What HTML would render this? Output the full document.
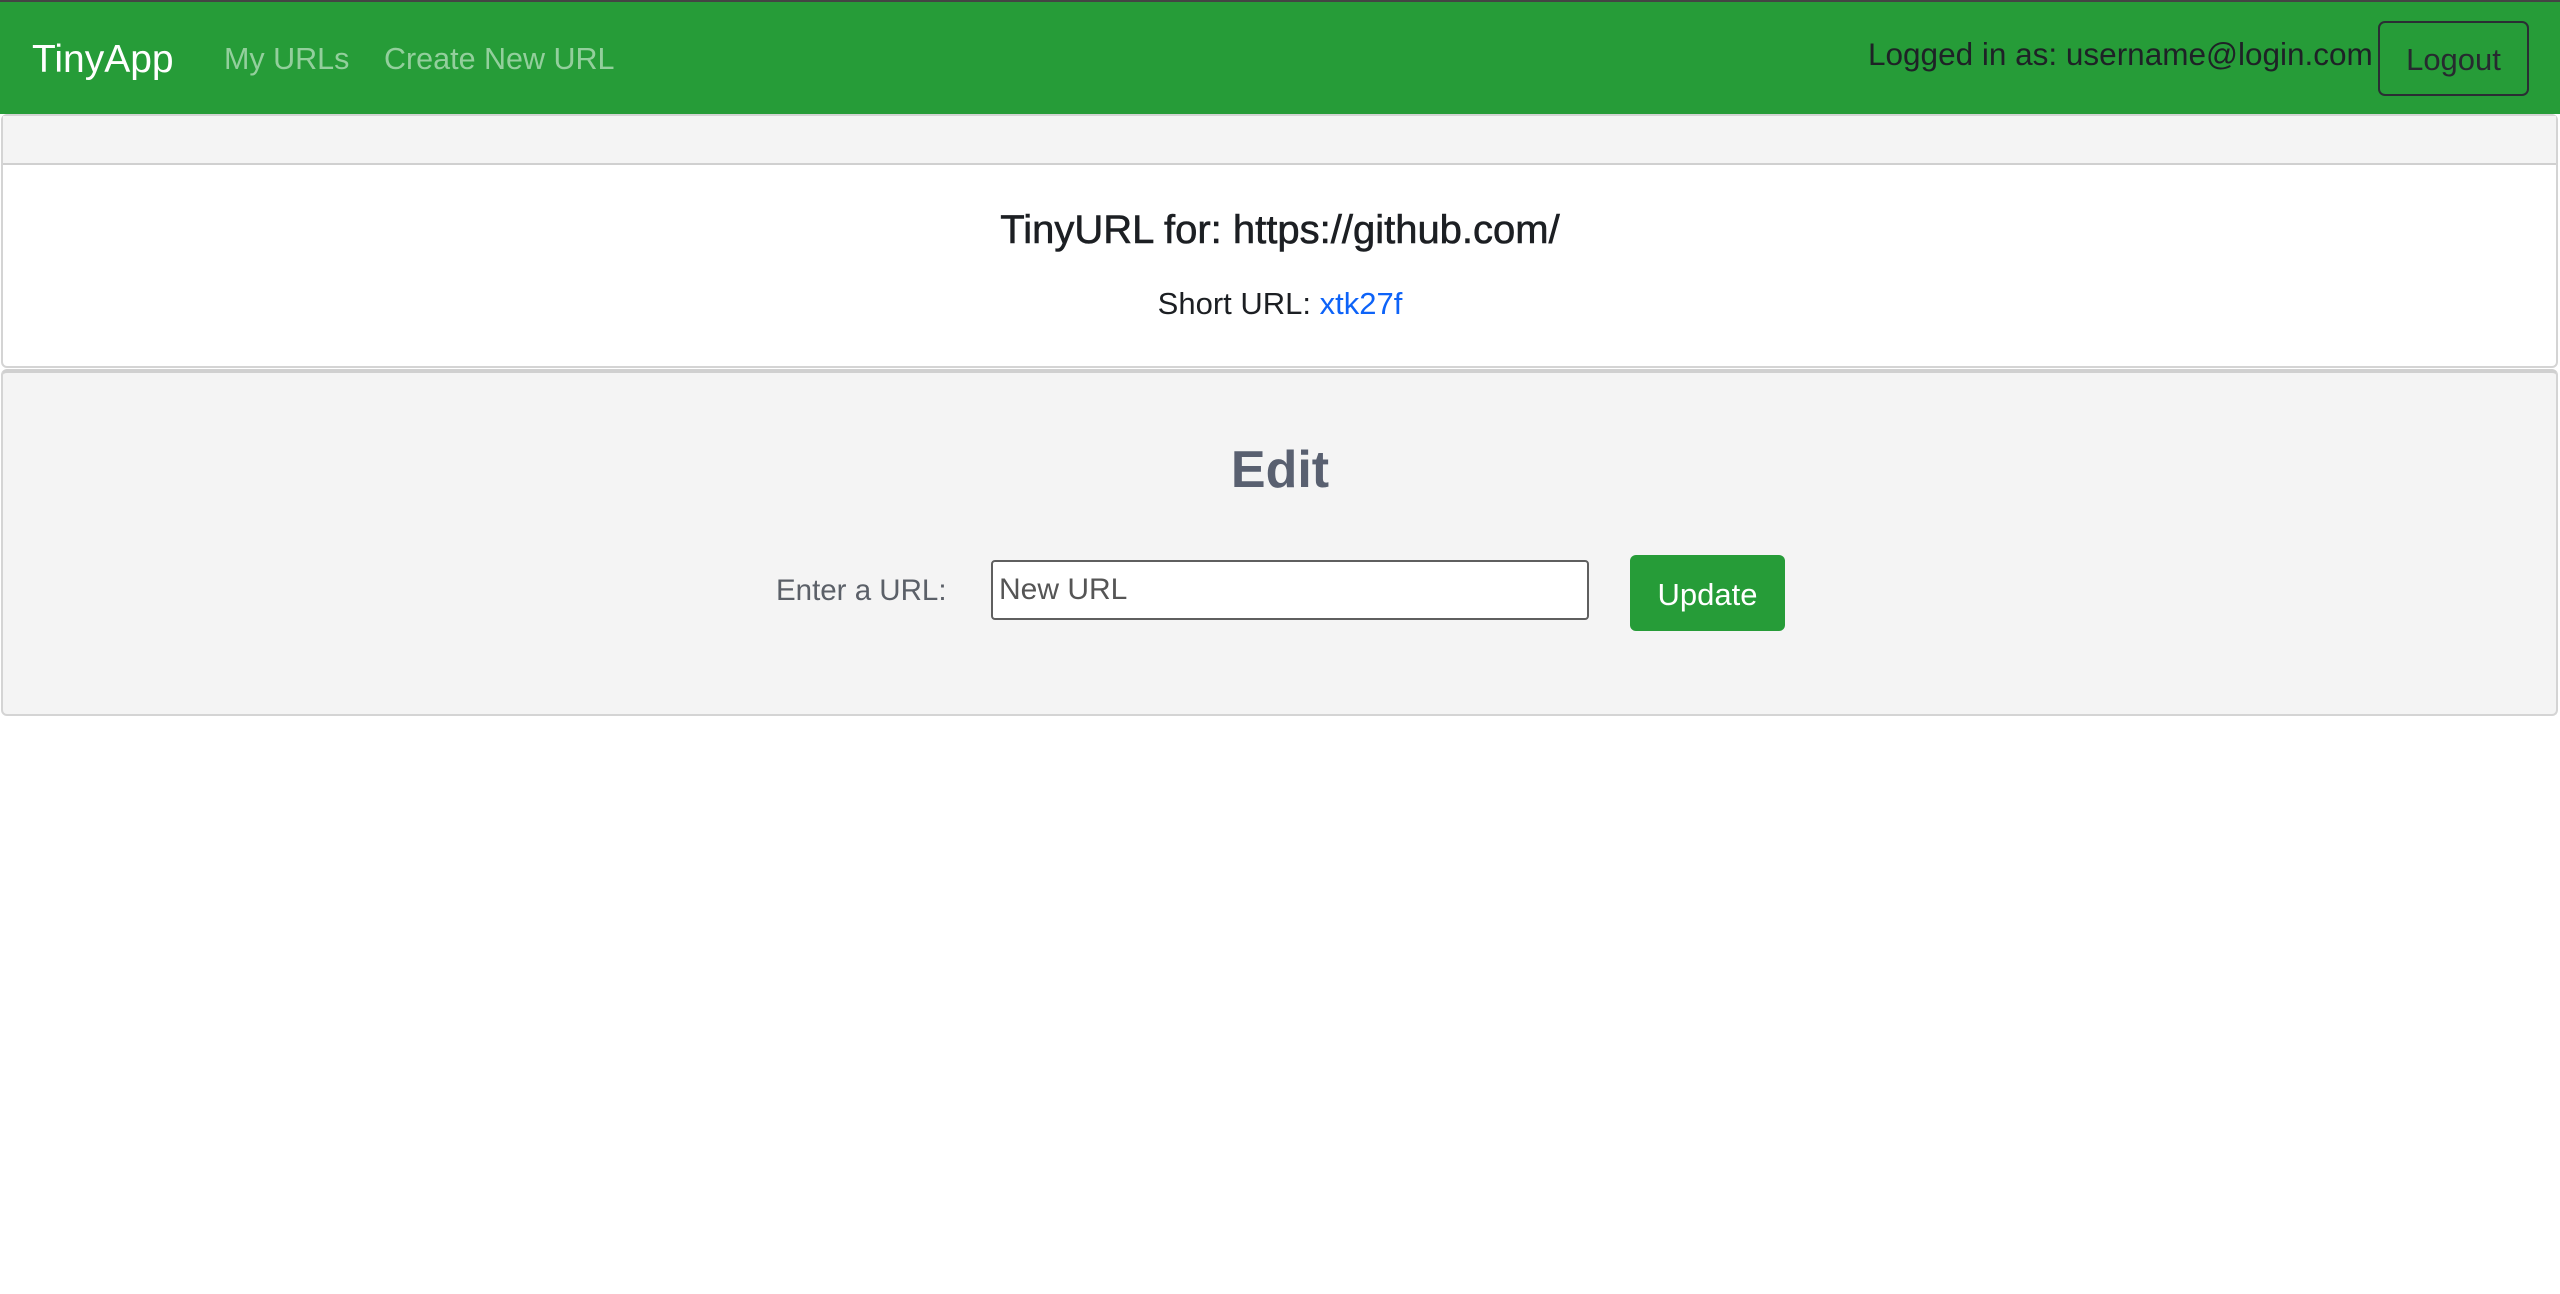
<!DOCTYPE html>
<html><head><meta charset="utf-8"><style>
*{margin:0;padding:0;box-sizing:border-box}
body{width:2560px;height:1294px;background:#fff;font-family:"Liberation Sans",sans-serif;position:relative;overflow:hidden;color:#212529}
.a{position:absolute;white-space:nowrap;line-height:1}
#top{position:absolute;left:0;top:0;width:2560px;height:2px;background:#444}
#nav{position:absolute;left:0;top:2px;width:2560px;height:112px;background:#269c38}
.card{position:absolute;left:1px;width:2557px;border:2px solid #d4d4d4;border-radius:6px}
</style></head><body>
<div id="top"></div>
<div id="nav"></div>
<div class="a" style="left:32px;top:40px;font-size:39px;color:#fff">TinyApp</div>
<div class="a" style="left:224px;top:44px;font-size:30.5px;color:#93cf9c">My URLs</div>
<div class="a" style="left:384px;top:44px;font-size:30.5px;color:#93cf9c">Create New URL</div>
<div class="a" style="left:1868px;top:39px;font-size:31.5px;color:#1e2226">Logged in as: username@login.com</div>
<div style="position:absolute;left:2378px;top:21px;width:151px;height:75px;border:2px solid #2a2e33;border-radius:7px"></div>
<div class="a" style="left:2378px;top:44px;width:151px;text-align:center;font-size:31px;color:#262a2f">Logout</div>

<div class="card" style="top:114px;height:254px;background:#fff"></div>
<div style="position:absolute;left:3px;top:116px;width:2553px;height:49px;background:#f4f4f4;border-bottom:2px solid #d0d0d0"></div>
<div class="a" style="left:0;width:2560px;text-align:center;top:210px;font-size:40px;color:#1c1f23;-webkit-text-stroke:0.6px #1c1f23">TinyURL for: https://github.com/</div>
<div class="a" style="left:0;width:2560px;text-align:center;top:288px;font-size:31px;color:#1c1f23">Short URL: <span style="color:#0d63f8">xtk27f</span></div>

<div class="card" style="top:369px;height:347px;background:#f4f4f4;border-top:4px solid #d0d0d0"></div>
<div class="a" style="left:0;width:2560px;text-align:center;top:444px;font-size:52px;color:#596070;font-weight:bold">Edit</div>
<div class="a" style="left:776px;top:576px;font-size:29.5px;color:#5b6068">Enter a URL:</div>
<div style="position:absolute;left:991px;top:560px;width:598px;height:60px;background:#fff;border:2px solid #5f5f5f;border-radius:4px"></div>
<div class="a" style="left:999px;top:575px;font-size:30px;color:#555">New URL</div>
<div style="position:absolute;left:1630px;top:555px;width:155px;height:76px;background:#269c38;border-radius:6px"></div>
<div class="a" style="left:1630px;top:579px;width:155px;text-align:center;font-size:31px;color:#fff">Update</div>
</body></html>
